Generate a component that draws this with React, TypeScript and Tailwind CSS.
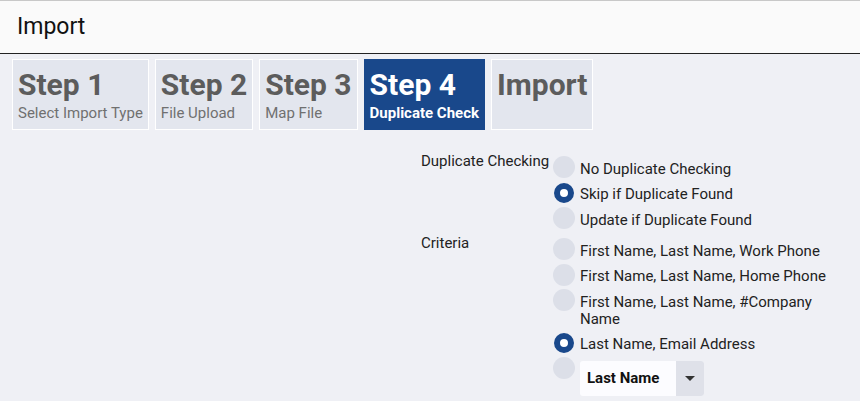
import React from "react";

const font = { fontFamily: "Roboto, 'Liberation Sans', sans-serif" };

function Tile({ title, sub, active }: { title: string; sub?: string; active?: boolean }) {
  return (
    <div
      className={
        "h-[71px] border px-[5px] pt-[8px] " +
        (active ? "bg-[#19488b] border-[#19488b] text-white" : "bg-[#e3e6ee] border-white text-[#5c5c5c]")
      }
    >
      <div className="text-[30px] font-bold leading-[34px]">{title}</div>
      {sub && (
        <div className={"mt-[3px] text-[15px] leading-[17px] whitespace-nowrap " + (active ? "font-bold" : "text-[#707070]")}>
          {sub}
        </div>
      )}
    </div>
  );
}

function Radio({ checked }: { checked?: boolean }) {
  return (
    <div className="w-[22px] h-[22px] flex items-center justify-center shrink-0">
      {checked ? (
        <div className="w-[20px] h-[20px] rounded-full border-[6px] border-[#19488b] bg-white" />
      ) : (
        <div className="w-[22px] h-[22px] rounded-full bg-[#dcdfe8]" />
      )}
    </div>
  );
}

function Option({ checked, children }: { checked?: boolean; children: React.ReactNode }) {
  return (
    <div className="flex items-start min-h-[25px]">
      <Radio checked={checked} />
      <div className="ml-[5px] pt-[4.5px] pb-[4px] text-[15px] leading-[17px] text-[#222] w-[255px]">{children}</div>
    </div>
  );
}

export default function App() {
  return (
    <div className="w-[860px] h-[401px] bg-[#eff0f5] overflow-hidden" style={font}>
      <div className="h-[54px] bg-[#fafafa] border-t border-t-[#c8c8c8] border-b border-b-[#222] flex items-center pl-[17px]">
        <span className="text-[23px] text-[#111] leading-none -mt-[2px]">Import</span>
      </div>
      <div className="flex gap-[6px] pl-[12px] pt-[5px]">
        <Tile title="Step 1" sub="Select Import Type" />
        <Tile title="Step 2" sub="File Upload" />
        <Tile title="Step 3" sub="Map File" />
        <Tile title="Step 4" sub="Duplicate Check" active />
        <Tile title="Import" />
      </div>
      <div className="pl-[421px] pt-[26px] text-[15px] text-[#222]">
        <div className="flex">
          <div className="w-[132px] -mt-[3px] leading-[17px]">Duplicate Checking</div>
          <div className="flex flex-col">
            <Option>No Duplicate Checking</Option>
            <Option checked>Skip if Duplicate Found</Option>
            <Option>Update if Duplicate Found</Option>
          </div>
        </div>
        <div className="flex mt-[5.5px]">
          <div className="w-[132px] -mt-[3px] leading-[17px]">Criteria</div>
          <div className="flex flex-col">
            <Option>First Name, Last Name, Work Phone</Option>
            <Option>First Name, Last Name, Home Phone</Option>
            <Option>First Name, Last Name, #Company Name</Option>
            <Option checked>Last Name, Email Address</Option>
            <div className="flex items-start">
              <Radio />
              <div className="ml-[5px] mt-[4px] w-[124px] h-[35px] bg-[#fcfcff] rounded-[3px] flex overflow-hidden">
                <div className="flex-1 flex items-center pl-[7px] font-bold text-[15px] text-[#111]">Last Name</div>
                <div className="w-[28px] bg-[#dfe1e9] flex items-center justify-center">
                  <svg width="10" height="6" viewBox="0 0 10 6"><path d="M0 0h10L5 5z" fill="#333" /></svg>
                </div>
              </div>
            </div>
          </div>
        </div>
      </div>
    </div>
  );
}
